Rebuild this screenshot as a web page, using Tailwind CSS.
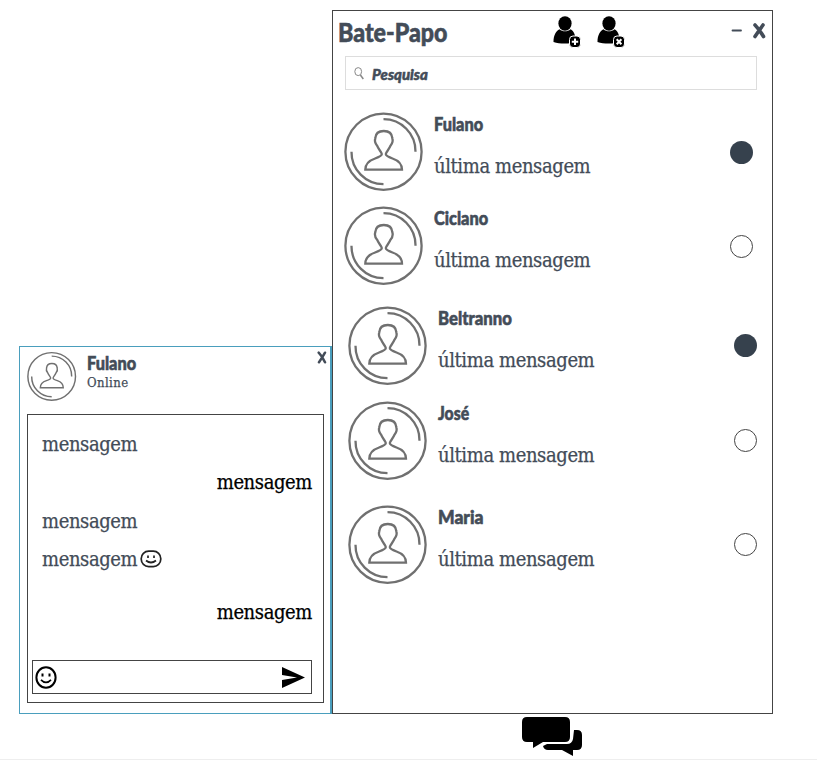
<!DOCTYPE html>
<html lang="pt-BR">
<head>
<meta charset="utf-8">
<title>Bate-Papo</title>
<script src="https://cdn.jsdelivr.net/npm/@tailwindcss/browser@4"></script>
</head>
<body class="bg-white w-[817px] h-[760px] overflow-hidden text-[#434c58] font-['DejaVu_Serif',serif] font-stretch-condensed [-webkit-text-stroke:0.25px_currentColor]">
<svg class="hidden">
  <symbol id="avatar" viewBox="0.5 -0.7 80 80">
    <g fill="none" stroke="#707070" stroke-width="2.3">
      <circle cx="40" cy="40" r="38.100"/>
      <path d="M40 7.500A32 32 0 0 1 72 40M8 40A32 32 0 0 0 40 72.500"/>
      <path d="M21.800 58H58.500C58.500 51 54 48.500 49 46.800C44.500 45.200 42.300 44.200 42.300 42.400C42.300 40.500 45.500 38 47 34C49.200 31.500 49.600 29 48.800 26.500C48.500 22 45.500 19.300 40.300 19.300C35.100 19.300 32.100 22 31.800 26.500C31 29 31.400 31.500 33.600 34C35.100 38 38.300 40.500 38.300 42.400C38.300 44.200 36.100 45.200 31.600 46.800C26.600 48.500 21.800 51 21.800 58Z"/>
    </g>
  </symbol>
  <symbol id="person" viewBox="0 0 28 32">
    <ellipse cx="12" cy="7.500" rx="6.600" ry="7.300"/>
    <path d="M0.500 26C0.500 19 3 15 6.500 13.200C9.500 16 14.500 16 17.500 13.200C21 15 22.600 19 22.800 26C16 28 7 28 0.500 26Z"/>
    <rect x="16.500" y="20" width="11" height="11.500" rx="3.500" stroke="white" stroke-width="1"/>
  </symbol>
</svg>
<div class="flex items-end h-[714px] pl-[19px]">
  <section class="w-[313px] h-[368px] border border-r-2 border-[#4a9ebd] pl-[7px] pt-[4px] shrink-0">
    <header class="flex h-[63px]">
      <svg class="w-[50px] h-[50px]"><use href="#avatar"/></svg>
      <div class="ml-[10px] pt-[1px] w-[230px]">
        <h2 class="font-['Lato',sans-serif] font-black text-[19px] leading-[22px] origin-left scale-x-[0.86] w-max [-webkit-text-stroke:0.6px_currentColor]">Fulano</h2>
        <p class="text-[13px] leading-[17px] tracking-[0.4px] w-max">Online</p>
      </div>
      <svg class="w-[10px] h-[13px]" viewBox="0 0 10 13" fill="none" stroke="#434c58" stroke-width="2.500" stroke-linecap="round"><path d="M1.700 1.700Q5 5 8 11.300M8 1.700Q5 7 2 11.300"/></svg>
    </header>
    <div class="w-[297px] h-[289px] border border-[#444] pl-[4px] pr-[11px] flex flex-col">
      <div class="pl-[10px] pt-[15px] text-[20px] leading-[28px] tracking-[-0.4px] flex flex-col">
        <p>mensagem</p>
        <p class="mt-[10px] self-end text-black">mensagem</p>
        <p class="mt-[11px]">mensagem</p>
        <p class="mt-[10px] flex items-center">mensagem
          <svg class="w-[22px] h-[18px] ml-[3px]" viewBox="0 0 22 18" fill="none" stroke="#222" stroke-width="1.700"><rect x="1.200" y="1.200" width="19.600" height="15.400" rx="7.500"/><path d="M6 10.500Q11 14.500 16 10.500M8 5.500V8M14 5.500V8"/></svg>
        </p>
        <p class="mt-[25px] self-end text-black">mensagem</p>
      </div>
      <div class="mt-[34px] w-[280px] h-[34px] border border-[#444] flex items-center justify-between pl-[2px] pr-[6px] shrink-0">
        <svg class="w-[22px] h-[23px]" viewBox="0 0 22 23" fill="none" stroke="black" stroke-width="2"><ellipse cx="11" cy="11.500" rx="9.600" ry="10.200"/><path d="M6 13.800Q11 19 16 13.800" stroke-width="1.700"/><path d="M7.500 7.500V10.500M14.500 7.500V10.500"/></svg>
        <svg class="w-[23px] h-[21px]" viewBox="0 0 23 21"><path d="M0 0L23 10.500L0 21V13L15 10.500L0 8Z"/></svg>
      </div>
    </div>
  </section>
  <section class="w-[441px] h-[704px] border border-[#444] shrink-0">
    <header class="flex h-[45px] pl-[5px]">
      <h1 class="font-['Lato',sans-serif] font-black text-[27px] leading-[41px] w-[215px] [-webkit-text-stroke:0.6px_currentColor]"><span class="inline-block origin-left scale-x-[0.86]">Bate-Papo</span></h1>
      <svg class="w-[28px] h-[32px] mt-[5px]"><use href="#person"/><path d="M22 22.500V29M18.800 25.750H25.200" stroke="white" stroke-width="2"/></svg>
      <svg class="w-[28px] h-[32px] mt-[5px] ml-[16px]"><use href="#person"/><path d="M19.700 23.300L24.400 28.200M24.400 23.300L19.700 28.200" stroke="white" stroke-width="2"/></svg>
      <svg class="w-[35px] h-[18px] mt-[11px] ml-[106px]" viewBox="0 0 35 18" fill="none" stroke="#434c58" stroke-linecap="round"><path d="M1.500 8.500H10" stroke-width="1.800"/><path d="M24 3Q28 7 32.500 14.500M32 3Q27 10 24 14.500" stroke-width="3.600"/></svg>
    </header>
    <div class="ml-[12px] w-[412px] h-[34px] border border-[#ddd] flex items-center pl-[8px]">
      <svg class="w-[10px] h-[13px]" viewBox="0 0 10 13" fill="none" stroke="#888" stroke-width="1"><ellipse cx="4.200" cy="4.600" rx="3.400" ry="4"/><path d="M6.400 8L9.300 12" stroke-width="1.500"/></svg>
      <span class="ml-[8px] pt-[2px] font-['Lato',sans-serif] font-black italic text-[15px] [-webkit-text-stroke:0.5px_currentColor]">Pesquisa</span>
    </div>
    <ul class="pt-[21px]">
      <li class="flex h-[80px] ml-[11px]">
        <svg class="w-[80px] h-[80px]"><use href="#avatar"/></svg>
        <div class="ml-[10px] w-[296px] pt-[1px]"><h2 class="font-['Lato',sans-serif] font-black text-[19px] leading-[24px] origin-left scale-x-[0.86] w-max [-webkit-text-stroke:0.6px_currentColor]">Fulano</h2><p class="mt-[16px] text-[20px] leading-[28px] tracking-[-0.4px]">última mensagem</p></div>
        <i class="mt-[30px] w-[23px] h-[23px] rounded-full bg-[#36414d]"></i>
      </li>
      <li class="flex h-[80px] ml-[11px] mt-[14px]">
        <svg class="w-[80px] h-[80px]"><use href="#avatar"/></svg>
        <div class="ml-[10px] w-[296px] pt-[1px]"><h2 class="font-['Lato',sans-serif] font-black text-[19px] leading-[24px] origin-left scale-x-[0.86] w-max [-webkit-text-stroke:0.6px_currentColor]">Ciclano</h2><p class="mt-[16px] text-[20px] leading-[28px] tracking-[-0.4px]">última mensagem</p></div>
        <i class="mt-[30px] w-[23px] h-[23px] rounded-full border border-[#444]"></i>
      </li>
      <li class="flex h-[80px] ml-[15px] mt-[20px]">
        <svg class="w-[80px] h-[80px]"><use href="#avatar"/></svg>
        <div class="ml-[10px] w-[296px] pt-[1px]"><h2 class="font-['Lato',sans-serif] font-black text-[19px] leading-[24px] origin-left scale-x-[0.88] w-max [-webkit-text-stroke:0.6px_currentColor]">Beltranno</h2><p class="mt-[16px] text-[20px] leading-[28px] tracking-[-0.4px]">última mensagem</p></div>
        <i class="mt-[29px] w-[23px] h-[23px] rounded-full bg-[#36414d]"></i>
      </li>
      <li class="flex h-[80px] ml-[15px] mt-[15px]">
        <svg class="w-[80px] h-[80px]"><use href="#avatar"/></svg>
        <div class="ml-[10px] w-[296px] pt-[1px]"><h2 class="font-['Lato',sans-serif] font-black text-[19px] leading-[24px] origin-left scale-x-[0.83] w-max [-webkit-text-stroke:0.6px_currentColor]">José</h2><p class="mt-[16px] text-[20px] leading-[28px] tracking-[-0.4px]">última mensagem</p></div>
        <i class="mt-[29px] w-[23px] h-[23px] rounded-full border border-[#444]"></i>
      </li>
      <li class="flex h-[80px] ml-[15px] mt-[24px]">
        <svg class="w-[80px] h-[80px]"><use href="#avatar"/></svg>
        <div class="ml-[10px] w-[296px] pt-[1px]"><h2 class="font-['Lato',sans-serif] font-black text-[19px] leading-[24px] origin-left scale-x-[0.92] w-max [-webkit-text-stroke:0.6px_currentColor]">Maria</h2><p class="mt-[16px] text-[20px] leading-[28px] tracking-[-0.4px]">última mensagem</p></div>
        <i class="mt-[29px] w-[23px] h-[23px] rounded-full border border-[#444]"></i>
      </li>
    </ul>
  </section>
</div>
<footer class="h-[46px] border-b border-[#eee] pt-[3px] pl-[522px]">
  <svg class="w-[60px] h-[39px]" viewBox="0 0 60 39"><path d="M5 0H43Q48 0 48 5V20Q48 25 43 25H21L11 31V25H5Q0 25 0 20V5Q0 0 5 0Z"/><path d="M52 13H55Q60 13 60 18V28Q60 33 55 33H51V39L40 33H26Q22 33 21 29L25 27H45Q50 27 51 22Z"/></svg>
</footer>
</body>
</html>
